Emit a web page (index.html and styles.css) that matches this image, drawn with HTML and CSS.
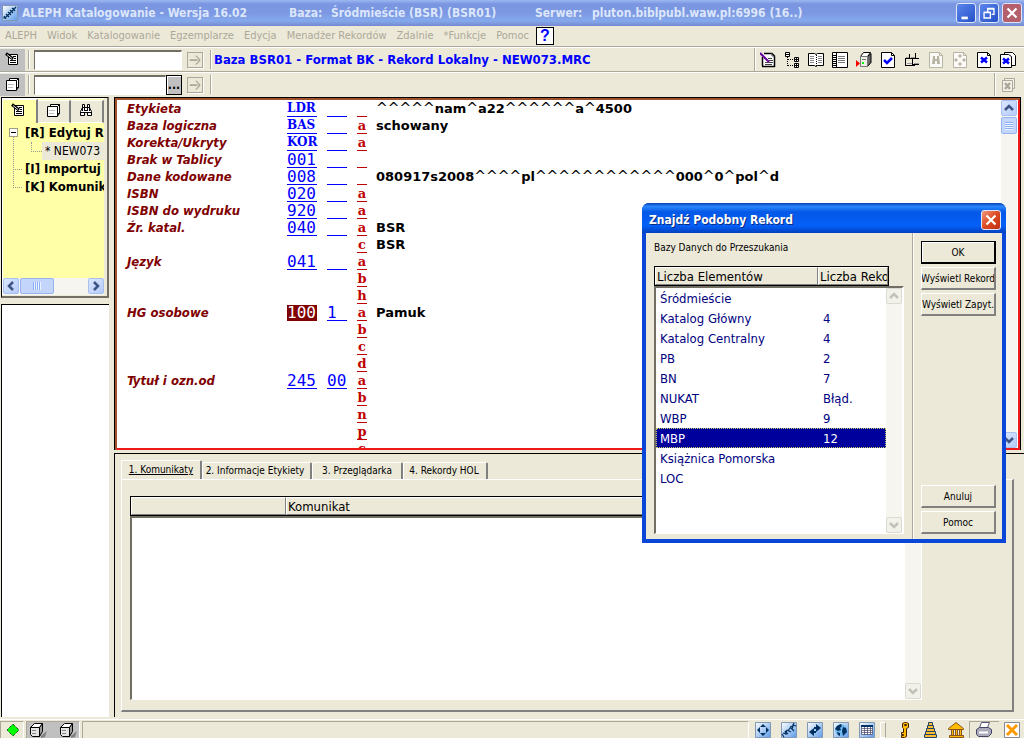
FILE: index.html
```
<!DOCTYPE html>
<html lang="pl">
<head>
<meta charset="utf-8">
<title>ALEPH Katalogowanie</title>
<link rel="stylesheet" href="styles.css">
</head>
<body>
<svg class="defs" aria-hidden="true">
  <symbol id="i-note" viewBox="0 0 16 16"><path d="M4.500 3.500h9v10h-9z" fill="#fff" stroke="#000"/><path d="M9 5.500h3M10 7.500h2M6 9.500h6M6 11.500h6" stroke="#000" fill="none"/><path d="M2 2.500l7 5.500" stroke="#000" stroke-width="3"/><path d="M3 3.500l5 4" stroke="#ddd"/></symbol>
  <symbol id="i-pages" viewBox="0 0 16 16"><path d="M5.500 4.500v-2h9v9h-2" fill="#fff" stroke="#000"/><path d="M2.500 4.500h10v10h-10z" fill="#fff" stroke="#000"/><path d="M12.500 4.500l2-2M12.500 14l2-2.500" stroke="#000"/><path d="M4 8.500h6M4 11.500h5" stroke="#bbb"/></symbol>
  <symbol id="i-binoc" viewBox="0 0 16 16"><path d="M4.500 2.500h2v3h3v-3h2v3l2 4v4h-4v-3h-3v3h-4v-4l2-4z" fill="#fff" stroke="#000"/><path d="M4 5.500h3M9 5.500h3M3 10.500h4M9 10.500h4M6.500 6v3M9.500 6v3M7 8.500h2M4.500 6v3M11.500 6v3" stroke="#000" fill="none"/></symbol>
  <symbol id="i-arrow" viewBox="0 0 16 16"><path d="M2 7h9v2H2zM8 3h2l4 4v2l-4 4H8l4-4V7z" fill="#aca899"/></symbol>
  <symbol id="i-up" viewBox="0 0 14 14"><path d="M3 9l4-4 4 4" fill="none" stroke="currentColor" stroke-width="2.500"/></symbol>
  <symbol id="i-down" viewBox="0 0 14 14"><path d="M3 5l4 4 4-4" fill="none" stroke="currentColor" stroke-width="2.500"/></symbol>
  <symbol id="i-left" viewBox="0 0 14 14"><path d="M9 3L5 7l4 4" fill="none" stroke="currentColor" stroke-width="2.500"/></symbol>
  <symbol id="i-right" viewBox="0 0 14 14"><path d="M5 3l4 4-4 4" fill="none" stroke="currentColor" stroke-width="2.500"/></symbol>
  <symbol id="i-page" viewBox="0 0 16 16"><path d="M1.500 .500h10l3 3v12h-13z" fill="#fff" stroke="currentColor"/><path d="M11.500 .500v3h3" fill="none" stroke="currentColor"/></symbol>
  <symbol id="i-cube" viewBox="0 0 18 16"><path d="M12 14l6-5-2 6-4 1z" fill="#808080"/><path d="M1.500 5.500l4-4h8l-3 4z" fill="#fff" stroke="#000"/><path d="M10.500 5.500l3-4v8l-3 5z" fill="#999" stroke="#000"/><path d="M1.500 5.500h9v9h-7l-2-2z" fill="#e4e4e4" stroke="#000"/><path d="M3 8.500h4M3 11.500h4" stroke="#888"/></symbol>
  <linearGradient id="tile" x2="1" y2="1"><stop offset="0" stop-color="#fff"/><stop offset="1" stop-color="#5b9bea"/></linearGradient>
  <symbol id="i-tile" viewBox="0 0 16 16"><path d="M.500 .500h15v15H.500z" fill="url(#tile)" stroke="#8398b4"/></symbol>
</svg>

<header class="titlebar">
  <svg class="logo" viewBox="0 0 16 16"><use href="#i-tile"/><path d="M1 13l3-1 10-10M2 11l2 3M4 9l3 3M6 7l3 3M8 5l3 3M10 3l3 3" stroke="#003060" stroke-width="1.300" fill="none"/></svg>
  <h1 class="title"><span class="t-app">ALEPH Katalogowanie - Wersja 16.02</span><span class="t-base">Baza:</span><span class="t-name">Śródmieście (BSR) (BSR01)</span><span class="t-serv">Serwer:</span><span>pluton.biblpubl.waw.pl:6996 (16..)</span></h1>
  <div class="winbtns">
    <button class="wbtn" aria-label="Minimalizuj"><svg viewBox="0 0 20 20"><path d="M5 14h7v3H5z" fill="#fff"/></svg></button>
    <button class="wbtn" aria-label="Przywróć"><svg viewBox="0 0 20 20"><path d="M8.500 9V5.500h7v6H13M8 5h8M4.500 9.500h7v6h-7zM4 9h8" fill="none" stroke="#fff" stroke-width="1.500"/></svg></button>
    <button class="wbtn wclose dim" aria-label="Zamknij"><svg viewBox="0 0 20 20"><path d="M5 5l10 10M15 5L5 15" stroke="#fff" stroke-width="2.500"/></svg></button>
  </div>
</header>

<nav class="menu">
  <button>ALEPH</button><button>Widok</button><button>Katalogowanie</button><button>Egzemplarze</button><button>Edycja</button><button>Menadżer Rekordów</button><button>Zdalnie</button><button>*Funkcje</button><button>Pomoc</button>
  <button class="help">?</button>
</nav>

<div class="toolbar">
  <span class="mode"><svg class="ic"><use href="#i-note"/></svg></span>
  <i class="grip"></i>
  <input class="field" type="text" aria-label="Numer rekordu">
  <button class="go" aria-label="Przejdź"><svg class="ic"><use href="#i-arrow"/></svg></button>
  <i class="sep"></i>
  <strong class="record">Baza BSR01 - Format BK - Rekord Lokalny - NEW073.MRC</strong>
  <div class="tools">
    <button aria-label="Edytuj"><svg class="ic" viewBox="0 0 16 16"><path d="M2.500 1.500h9l3 3v10h-12z" fill="#fff"/><path d="M4 1.500h8l3 3M14.500 4v11M15 14.500H2M2.500 14V5" fill="none" stroke="#000" stroke-width="1.500"/><path d="M12 1v3h3M8 6.500h4M9 8.500h4M5 10.500h8M5 12.500h7" fill="none" stroke="#444"/><path d="M0 1l9 9" stroke="#609" stroke-width="2"/></svg></button>
    <button aria-label="Drzewo"><svg class="ic" viewBox="0 0 16 16"><path d="M1.500 .500h4v4h-4zM10.500 5.500h4v4h-4zM10.500 11.500h4v4h-4z" fill="#fff" stroke="#000"/><path d="M10 7.500h5M12.500 5v5M10 13.500h5M12.500 11v5M1 2.500h5" stroke="#000"/><path d="M3.500 5v9M4 7.500h6M4 13.500h6" stroke="#000" stroke-dasharray="1 1"/></svg></button>
    <button aria-label="Książka"><svg class="ic" viewBox="0 0 16 16"><path d="M.500 1.500h6l1.500 1 1.500-1h6v12h-6l-1.500 1-1.500-1h-6z" fill="#fff" stroke="#000"/><path d="M8.500 3v11" stroke="#000" stroke-dasharray="1 1"/><path d="M2 4.500h4M2 6.500h4M2 8.500h4M2 10.500h4M10 4.500h4M10 6.500h4M10 8.500h4M10 10.500h4" stroke="#888"/></svg></button>
    <button aria-label="Notes"><svg class="ic" viewBox="0 0 16 16"><path d="M.500 .500h15v15H.500z" fill="#fff" stroke="#000"/><path d="M4.500 1v15" stroke="#000"/><path d="M1 3.500h3M1 5.500h3M1 7.500h3M1 9.500h3M1 11.500h3M1 13.500h3" stroke="#000"/><path d="M6 4.500h7M6 6.500h7M6 8.500h7M6 10.500h7" stroke="#777"/></svg></button>
    <button aria-label="Serwer"><svg class="ic" viewBox="0 0 16 16"><path d="M4.500 4.500l3-4h7l-3 4z" fill="#fff" stroke="#000"/><path d="M11.500 4.500l3.500-3v9l-3.500 4z" fill="#666" stroke="#000"/><path d="M4.500 4.500h7v10h-7z" fill="#f0eee4" stroke="#777"/><path d="M6 7.500h4" stroke="#777"/><path d="M6 10h2v2H6z" fill="#0f0"/><path d="M0 8l4 3.500L0 15z" fill="#f00"/></svg></button>
    <button aria-label="Sprawdź"><svg class="ic" viewBox="0 0 16 16"><use href="#i-page"/><path d="M4 8l3 3 5-5" fill="none" stroke="#00f" stroke-width="2.500"/></svg></button>
    <button aria-label="Podziel"><svg class="ic" viewBox="0 0 16 16"><path d="M1 6.500h14M5.500 2v5M11.500 1v6M1 13.500h10M1.500 7v6M8.500 7v7M9 12.500h6" stroke="#000"/><path d="M3 11.500h5M10 11.500h5M2 5.500h3M7 5.500h4" stroke="#999"/></svg></button>
    <button aria-label="Szukaj"><svg class="ic dimic" viewBox="0 0 16 16"><use href="#i-page"/><path d="M5 4h2v3h2V4h2l1 8H9V9H7v3H4z" fill="#aca899"/></svg></button>
    <button aria-label="Przenieś"><svg class="ic dimic" viewBox="0 0 16 16"><use href="#i-page"/><path d="M8 2l2 2-2 2-2-2zM8 10l2 2-2 2-2-2zM4 6l2 2-2 2-2-2zM12 6l2 2-2 2-2-2z" fill="#aca899"/></svg></button>
    <button aria-label="Zamknij rekord"><svg class="ic" viewBox="0 0 16 16"><use href="#i-page"/><path d="M5 5.500l6 5M11 5.500l-6 5" stroke="#00f" stroke-width="2.500"/></svg></button>
    <button aria-label="Zamknij wszystkie"><svg class="ic" viewBox="0 0 16 16"><path d="M4.500 2.500v-2h8l3 3v10h-4" fill="#fff" stroke="#000"/><path d="M.500 2.500h8l3 2v11h-11z" fill="#fff" stroke="#000"/><path d="M3 6.500l6 5M9 6.500l-6 5" stroke="#00f" stroke-width="2.500"/></svg></button>
  </div>
</div>
<div class="toolbar">
  <span class="mode"><svg class="ic"><use href="#i-pages"/></svg></span>
  <i class="grip"></i>
  <input class="field short" type="text" aria-label="Kod kreskowy">
  <button class="dots" aria-label="Lista">...</button>
  <button class="go" aria-label="Przejdź do egzemplarza"><svg class="ic"><use href="#i-arrow"/></svg></button>
  <i class="sep"></i>
  <div class="tools last">
    <button aria-label="Zamknij egzemplarze"><svg class="ic" viewBox="0 0 16 16"><path d="M4.500 3.500v-2h10v10h-2M2.500 3.500h10v11h-10z" fill="#f4f2e8" stroke="#aca899"/><path d="M5 6l5 6M10 6l-5 6" stroke="#aca899" stroke-width="2.500"/></svg></button>
  </div>
</div>

<main class="main">
  <aside class="side">
    <section class="navbox">
      <div class="navtabs">
        <button class="on" aria-label="Rekordy"><svg class="ic"><use href="#i-note"/></svg></button>
        <button aria-label="Egzemplarze"><svg class="ic"><use href="#i-pages"/></svg></button>
        <button aria-label="Wyszukiwanie"><svg class="ic"><use href="#i-binoc"/></svg></button>
      </div>
      <ul class="tree">
        <li class="root"><span class="twist"></span>[R] Edytuj R</li>
        <li class="leaf"><span class="picked">* NEW073</span></li>
        <li class="node">[I] Importuj</li>
        <li class="node">[K] Komunika</li>
      </ul>
      <div class="hscroll">
        <button class="sb" aria-label="W lewo"><svg><use href="#i-left"/></svg></button>
        <span class="thumb"></span>
        <button class="sb" aria-label="W prawo"><svg><use href="#i-right"/></svg></button>
      </div>
    </section>
    <section class="blank"></section>
  </aside>

  <div class="work">
    <section class="editor">
      <div class="fields">
        <div class="row"><span class="lab">Etykieta</span><span class="tag alpha">LDR</span><span class="ind"></span><span class="sub"></span><span class="val"><i>^^^^^</i>nam<i>^</i>a22<i>^^^^^^</i>a<i>^</i>4500</span></div>
        <div class="row"><span class="lab">Baza logiczna</span><span class="tag alpha">BAS</span><span class="ind"></span><span class="sub">a</span><span class="val">schowany</span></div>
        <div class="row"><span class="lab">Korekta/Ukryty</span><span class="tag alpha">KOR</span><span class="ind"></span><span class="sub">a</span></div>
        <div class="row"><span class="lab">Brak w Tablicy</span><span class="tag">001</span><span class="ind"></span><span class="sub"></span></div>
        <div class="row"><span class="lab">Dane kodowane</span><span class="tag">008</span><span class="ind"></span><span class="sub"></span><span class="val">080917s2008<i>^^^^</i>pl<i>^^^^^^^^^^^^</i>000<i>^</i>0<i>^</i>pol<i>^</i>d</span></div>
        <div class="row"><span class="lab">ISBN</span><span class="tag">020</span><span class="ind"></span><span class="sub">a</span></div>
        <div class="row"><span class="lab">ISBN do wydruku</span><span class="tag">920</span><span class="ind"></span><span class="sub">a</span></div>
        <div class="row"><span class="lab">Źr. katal.</span><span class="tag">040</span><span class="ind"></span><span class="sub">a</span><span class="val">BSR</span></div>
        <div class="row"><span class="sub">c</span><span class="val">BSR</span></div>
        <div class="row"><span class="lab">Język</span><span class="tag">041</span><span class="ind"></span><span class="sub">a</span></div>
        <div class="row"><span class="sub">b</span></div>
        <div class="row"><span class="sub">h</span></div>
        <div class="row"><span class="lab">HG osobowe</span><span class="tag hot">100</span><span class="ind">1</span><span class="sub">a</span><span class="val">Pamuk</span></div>
        <div class="row"><span class="sub">b</span></div>
        <div class="row"><span class="sub">c</span></div>
        <div class="row"><span class="sub">d</span></div>
        <div class="row"><span class="lab">Tytuł i ozn.od</span><span class="tag">245</span><span class="ind">00</span><span class="sub">a</span></div>
        <div class="row"><span class="sub">b</span></div>
        <div class="row"><span class="sub">n</span></div>
        <div class="row"><span class="sub">p</span></div>
        <div class="row"><span class="sub">c</span></div>
      </div>
      <div class="vscroll">
        <button class="sb" aria-label="W górę"><svg><use href="#i-up"/></svg></button>
        <span class="thumb"></span>
        <button class="sb end" aria-label="W dół"><svg><use href="#i-down"/></svg></button>
      </div>
    </section>

    <section class="lower">
      <div class="tabs" role="tablist">
        <button role="tab" aria-selected="true" class="tab t1"><u>1. Komunikaty</u></button><button role="tab" class="tab t2">2. Informacje Etykiety</button><button role="tab" class="tab t3">3. Przeglądarka</button><button role="tab" class="tab t4">4. Rekordy HOL</button>
      </div>
      <div class="frame">
        <div class="messages">
          <div class="head mhead"><span></span><span>Komunikat</span></div>
          <div class="mlist">
            <div class="vscroll off"><button class="sb end" aria-label="Komunikaty w dół"><svg><use href="#i-down"/></svg></button></div>
          </div>
        </div>
      </div>
    </section>
  </div>
</main>

<footer class="status">
  <span class="cell c1"><svg class="ic" viewBox="0 0 16 16"><path d="M8 2l6 6-6 6-6-6z" fill="#0f0" stroke="#000" stroke-dasharray="1 1"/></svg></span>
  <span class="cell c2"><svg class="cube"><use href="#i-cube"/></svg><svg class="cube"><use href="#i-cube"/></svg></span>
  <span class="cell c3"></span>
  <div class="tray">
    <button aria-label="Wyszukiwanie"><svg class="ic" viewBox="0 0 16 16"><use href="#i-tile"/><path d="M8 2l3 3H5zM8 14l3-3H5zM2 8l3-3v6zM14 8l-3-3v6z" fill="#003060"/></svg></button>
    <button aria-label="MARC"><svg class="ic" viewBox="0 0 16 16"><use href="#i-tile"/><path d="M1 12l2 3M2 11l3 1-1-3 3 3M6 8l4 2M7 9l2-3M6 8l-1 3M9 5l4 4M9 5l3-1-1 3M15 4l-3-1 1-2" stroke="#003060" stroke-width="1.200" fill="none"/></svg></button>
    <button aria-label="Wymiana"><svg class="ic" viewBox="0 0 16 16"><use href="#i-tile"/><path d="M9 2l5 4-5 4V7H7V5h2zM7 6v3h2v2H7v3L2 10z" fill="#003060"/></svg></button>
    <button aria-label="Sieć"><svg class="ic" viewBox="0 0 16 16"><use href="#i-tile"/><circle cx="8" cy="8" r="6" fill="#70b8f0"/><path d="M4 4l4-2 1 2-2 2 1 2-3 1-3-2zM10 5l3 1 1 4-4 4-1-5zM4 10l3 1v3l-2-1z" fill="#003060"/></svg></button>
    <button aria-label="Tabela"><svg class="ic" viewBox="0 0 16 16"><use href="#i-tile"/><path d="M2.500 3.500h11v9h-11zM2.500 6.500h11M2.500 8.500h11M2.500 10.500h11M5.500 5v8M8.500 5v8M11.500 5v8" fill="#fff" stroke="#446" stroke-width=".700"/><path d="M2 3h12v2H2z" fill="#036"/></svg></button>
    <i class="handle"></i>
    <button aria-label="Klucz"><svg class="ic" viewBox="0 0 16 16"><path d="M6.500 1.500l2-1h2l2 1v4l-2 1v8l-2 1h-3v-2h2v-1h-2v-2h2v-4l-1-1z" fill="#fb0" stroke="#420"/><path d="M8.500 2.500h2v1h-2z" fill="#fff" stroke="#420"/></svg></button>
    <button aria-label="Baza"><svg class="ic" viewBox="0 0 16 16"><path d="M6.500 .500h4v3h-4zM5.500 3.500h6v3h-6zM4.500 6.500h8v3h-8zM3.500 9.500h10v3h-10zM2.500 12.500h12v3h-12z" fill="#fb3" stroke="#246"/></svg></button>
    <button aria-label="Biblioteka"><svg class="ic" viewBox="0 0 16 16"><path d="M.500 6.500l7.500-6 7.500 6v1H.500zM3.500 7.500h2v6h-2zM7.500 7.500h2v6h-2zM11.500 7.500h2v6h-2zM1.500 13.500h14v2h-14z" fill="#fb0" stroke="#852"/></svg></button>
    <button class="sunk" aria-label="Drukarka"><svg class="ic" viewBox="0 0 16 16"><path d="M5.500 .500h8l-2 5h-8z" fill="#fff" stroke="#557"/><path d="M.500 7.500l3-2h9l3 2v4l-3 3h-10l-2-2z" fill="#aab" stroke="#446"/><path d="M3 10.500h9" stroke="#fff" stroke-width="2"/></svg></button>
    <button aria-label="Zamknij"><svg class="ic" viewBox="0 0 16 16"><path d="M.500 .500h15v15H.500z" fill="#fff" stroke="#889"/><path d="M3 3l10 10M13 3L3 13" stroke="#f90" stroke-width="3"/></svg></button>
  </div>
</footer>

<section class="dialog" role="dialog" aria-labelledby="dlg">
  <header class="dtitle"><h2 id="dlg">Znajdź Podobny Rekord</h2><button class="wbtn wclose" aria-label="Zamknij okno"><svg viewBox="0 0 20 20"><path d="M5 5l10 10M15 5L5 15" stroke="#fff" stroke-width="2.500"/></svg></button></header>
  <div class="dbody">
    <div class="dleft">
      <p class="dlabel">Bazy Danych do Przeszukania</p>
      <div class="head dhead"><span>Liczba Elementów</span><span>Liczba Reko</span></div>
      <div class="dlist">
        <table>
          <tr><td>Śródmieście</td><td></td></tr>
          <tr><td>Katalog Główny</td><td>4</td></tr>
          <tr><td>Katalog Centralny</td><td>4</td></tr>
          <tr><td>PB</td><td>2</td></tr>
          <tr><td>BN</td><td>7</td></tr>
          <tr><td>NUKAT</td><td>Błąd.</td></tr>
          <tr><td>WBP</td><td>9</td></tr>
          <tr class="sel"><td>MBP</td><td>12</td></tr>
          <tr><td>Książnica Pomorska</td><td></td></tr>
          <tr><td>LOC</td><td></td></tr>
        </table>
        <div class="vscroll off"><button class="sb" aria-label="Lista w górę"><svg><use href="#i-up"/></svg></button><button class="sb end" aria-label="Lista w dół"><svg><use href="#i-down"/></svg></button></div>
      </div>
    </div>
    <div class="dbtns">
      <button class="btn default">OK</button>
      <button class="btn"><span>Wyświetl Rekord</span></button>
      <button class="btn"><span>Wyświetl Zapyt.</span></button>
      <button class="btn push">Anuluj</button>
      <button class="btn">Pomoc</button>
    </div>
  </div>
</section>
</body>
</html>
```

FILE: styles.css
```
* { box-sizing: border-box; }
html { height: 100%; }
body {
  margin: 0;
  min-height: 100%;
  height: 100vh;
  display: flex;
  flex-direction: column;
  overflow: hidden;
  background: #ece9d8;
  color: #000;
  font-family: "DejaVu Sans Condensed", "DejaVu Sans", sans-serif;
  font-size: 12px;
}
button { font: inherit; color: inherit; padding: 0; margin: 0; border: 0; background: none; }
.defs { position: absolute; width: 0; height: 0; }
.ic { display: block; width: 16px; height: 16px; }
i { font-style: normal; }

/* title bar */
.titlebar {
  display: flex;
  align-items: center;
  flex: none;
  height: 26px;
  padding: 0 2px;
  background: linear-gradient(#9db9f0, #7b96e1 15%, #7c98e2 50%, #85a9ec 80%, #7688cf);
}
.logo { width: 16px; height: 16px; }
.title {
  flex: 1;
  display: flex;
  margin: 0 0 0 4px;
  font-size: 12px;
  line-height: 16px;
  color: #dce6fa;
  white-space: nowrap;
}
.t-app { width: 267px; }
.t-base { width: 42px; }
.t-name { width: 204px; }
.t-serv { width: 57px; }
.winbtns { display: flex; gap: 3px; }
.wbtn {
  width: 20px;
  height: 20px;
  border: 1px solid #dfe6f8;
  border-radius: 3px;
  background: linear-gradient(135deg, #5c86ec, #2450c8);
}
.wbtn svg { display: block; width: 18px; height: 18px; }
.wclose { background: linear-gradient(135deg, #f09a80, #dc4a22 50%, #c03010); }
.wclose.dim { background: #b4606c; }

/* menu */
.menu {
  display: flex;
  align-items: center;
  flex: none;
  height: 20px;
  padding-left: 5px;
  gap: 10px;
  font-size: 11px;
  color: #aca899;
}
.menu button { margin-top: -2px; }
.menu .help {
  width: 18px;
  height: 18px;
  margin: 0 0 0 -3px;
  border: 1px solid #000;
  background: #fff;
  color: #00f;
  font: bold 16px/16px "Liberation Sans", sans-serif;
}

/* toolbars */
.toolbar {
  display: flex;
  align-items: center;
  flex: none;
  height: 25px;
  border-top: 1px solid #aca899;
  box-shadow: inset 0 1px #fff;
  padding-top: 1px;
}
.mode { width: 25px; height: 22px; padding: 2px 4px; background: #c0c0c0; }
.grip { width: 2px; height: 19px; margin: 0 4px 0 3px; background: #aca899; border-right: 1px solid #fff; }
.field {
  width: 148px;
  height: 20px;
  padding: 0 2px;
  border: 1px solid #fff;
  border-top: 2px solid #716f64;
  border-left-color: #716f64;
  background: #fff;
}
.short { width: 132px; }
.go { width: 16px; height: 16px; margin: 0 7px 0 5px; border: 1px solid #aca899; box-shadow: 1px 1px #fff; }
.go .ic { width: 14px; height: 14px; }
.dots {
  width: 16px;
  height: 20px;
  border: 1px solid #000;
  box-shadow: inset 1px 1px #fff;
  background: #c0c0c0;
  font-weight: bold;
  line-height: 10px;
}
.sep { width: 2px; height: 19px; background: #aca899; border-right: 1px solid #fff; }
.record { margin-left: 2px; color: #00f; font-size: 13px; line-height: 16px; white-space: nowrap; }
.tools {
  display: flex;
  gap: 8px;
  align-items: center;
  align-self: stretch;
  margin-left: auto;
  padding: 0 8px 0 5px;
  border-left: 1px solid #aca899;
  box-shadow: inset 1px 0 #fff;
}
.dimic { color: #aca899; opacity: .8; }

/* main area */
.main { flex: 1; min-height: 0; display: flex; gap: 5px; padding-top: 1px; }
.side { width: 109px; flex: none; display: flex; flex-direction: column; gap: 6px; }
.navbox {
  display: flex;
  flex-direction: column;
  height: 201px;
  margin-left: 1px;
  border: 1px solid #000;
  border-width: 1px 0 0 1px;
  border-right: 2px solid #716f64;
  border-bottom: 2px solid #716f64;
  background: #ffffa8;
  padding: 1px 3px 1px 1px;
  box-shadow: inset -3px -1px #ece9d8, inset 1px 1px #fff;
}
.navtabs { display: flex; height: 24px; flex: none; }
.navtabs button { width: 33px; margin-top: 1px; border-top: 1px solid #fff; border-right: 2px solid #808080; border-bottom: 1px solid #fff; padding: 0 0 4px 7px; background: #ece9d8; }
.navtabs button.on { width: 35px; margin-top: 0; background: #ffffa8; border-bottom: 0; }
.tree {
  flex: 1;
  margin: 0;
  padding: 1px 0 0 22px;
  list-style: none;
  overflow: hidden;
  white-space: nowrap;
  font-size: 13px;
  font-weight: bold;
  line-height: 18px;
}
.root { position: relative; }
.twist {
  position: absolute;
  left: -16px;
  top: 4px;
  width: 9px;
  height: 9px;
  border: 1px solid #a0a080;
  background: linear-gradient(#000, #000) center / 5px 1px no-repeat #fff;
}
.leaf { padding-left: 17px; font-size: 12px; font-weight: normal; position: relative; }
.picked { display: block; padding-left: 3px; background: #ece9d8; }
.leaf::before, .node::before, .root::before { content: ""; position: absolute; border: 0 dotted #999; }
.leaf::before { left: 6px; top: 0; width: 10px; height: 9px; border-width: 0 0 1px 1px; }
.root::before { left: -12px; top: 13px; width: 1px; height: 51px; border-left-width: 1px; }
.node { position: relative; }
.node::before { left: -12px; top: 9px; width: 9px; border-top-width: 1px; }
.hscroll { display: flex; height: 17px; flex: none; padding-bottom: 1px; background: #f6f5f0; }
.hscroll .thumb { width: 34px; margin: 0 auto 0 1px; }
.sb {
  width: 16px;
  height: 16px;
  flex: none;
  border: 1px solid #a8c0f0;
  border-radius: 2px;
  background: linear-gradient(135deg, #dce6fe, #b4cbfa);
  color: #3d5484;
}
.sb svg { display: block; width: 14px; height: 14px; }
.thumb {
  border: 1px solid #98b4ee;
  border-radius: 2px;
  background: repeating-linear-gradient(90deg, #8cb0f8 0 1px, #eef4fe 1px 2px) center / 8px 8px no-repeat, #c4d5fc;
}
.vscroll { display: flex; flex-direction: column; width: 16px; flex: none; background: #f6f5f0; }
.vscroll .end { margin-top: auto; }
.vscroll .thumb { height: 17px; margin-top: 1px; background: repeating-linear-gradient(#8cb0f8 0 1px, #eef4fe 1px 2px) center / 8px 8px no-repeat, #c4d5fc; }
.off .sb { border-color: #dcdad0; background: #f2f1ea; color: #c4c2b8; }
.blank { flex: 1; border: 1px solid #000; border-width: 1px 0 0 1px; margin-bottom: 2px; margin-left: 1px; background: #fff; }

/* record editor */
.work { flex: 1; min-width: 0; display: flex; flex-direction: column; gap: 3px; }
.editor {
  flex: 1;
  min-height: 0;
  display: flex;
  margin-right: 3px;
  border: 1px solid #000;
  border-bottom: 0;
  background: #fff;
  overflow: hidden;
  box-shadow: inset 2px 2px #a0522d, inset -2px -2px #f01818;
  padding: 2px 3px 2px 2px;
}
.fields { flex: 1; overflow: hidden; padding: 1px 0 0 10px; }
.row { display: grid; grid-template-columns: 160px 30px 10px 20px 10px 10px 9px 1fr; height: 17px; line-height: 16px; white-space: nowrap; }
.lab { grid-column: 1; color: #800000; font-size: 13px; font-style: italic; font-weight: bold; }
.tag, .ind { height: 16px; color: #00f; border-bottom: 1px solid #00f; font: 16px/15px "DejaVu Sans Mono", monospace; }
.tag { grid-column: 2; }
.alpha { font: bold 12px/15px "DejaVu Serif", serif; }
.ind { grid-column: 4; }
.hot { background: #800000; color: #fff; border-bottom-color: #800000; }
.sub { grid-column: 6; height: 16px; text-align: center; color: #c00000; border-bottom: 1px solid #c00000; font: bold 13px/15px "DejaVu Serif", serif; }
.val { grid-column: 8; font: bold 13px/16px "DejaVu Sans", sans-serif; }
.val i { font-weight: normal; font-size: 14px; line-height: 14px; }

/* lower panel */
.lower {
  flex: 0 0 42.5%;
  min-height: 0;
  display: flex;
  flex-direction: column;
  margin-bottom: 2px;
  border: 1px solid #000;
  border-width: 1px 0 0 1px;
  padding: 6px 10px 5px 6px;
}
.tabs { display: flex; align-items: flex-end; height: 19px; flex: none; font-size: 10px; }
.tab { height: 17px; border: 1px solid #fff; border-right: 2px solid #808080; border-bottom: 0; border-radius: 2px 2px 0 0; white-space: nowrap; }
.t1 { width: 81px; height: 19px; }
.t2 { width: 110px; padding-right: 3px; }
.t3 { width: 91px; }
.t4 { width: 85px; padding-right: 2px; }
.frame {
  flex: 1;
  min-height: 0;
  border: 1px solid #fff;
  border-right: 2px solid #808080;
  border-bottom: 2px solid #808080;
  padding: 16px 90px 10px 8px;
}
.messages { height: 100%; display: flex; flex-direction: column; }
.head {
  display: flex;
  flex: none;
  height: 20px;
  border: 1px solid #000;
  font-size: 13px;
  line-height: 18px;
  white-space: nowrap;
}
.head span { border: 1px solid #fff; border-right-color: #808080; border-bottom-color: #808080; overflow: hidden; padding-left: 1px; line-height: 17px; }
.mhead { margin-right: 16px; }
.mhead span:first-child { width: 155px; }
.mhead span:last-child { flex: 1; }
.mlist { flex: 1; display: flex; justify-content: flex-end; border: 1px solid #fff; border-top: 2px solid #716f64; border-left: 2px solid #716f64; background: #fff; }

/* status bar */
.status { display: flex; flex: none; height: 19px; gap: 2px; border-top: 1px solid #fff; padding-top: 1px; }
.cell { border: 1px solid #aca899; border-right-color: #fff; border-bottom: 0; height: 17px; overflow: hidden; }
.c1 { width: 24px; padding-left: 4px; }
.c2 { display: flex; width: 54px; gap: 12px; padding-left: 2px; background: #c0c0c0; }
.c3 { flex: 1; }
.cube { width: 18px; height: 16px; flex: none; }
.tray { display: flex; gap: 10px; align-items: center; padding: 0 4px; }
.tray .handle { width: 6px; height: 16px; margin: 0 0 0 -5px; border: 1px solid #fff; border-right-color: #aca899; }
.sunk { width: 30px; height: 17px; margin: 0 -5px; padding-left: 6px; border: 1px solid #aca899; border-width: 1px 0 0 1px; }

/* dialog window */
.dialog {
  position: absolute;
  right: 18px;
  top: 203px;
  width: 364px;
  height: 340px;
  display: flex;
  flex-direction: column;
  border: 4px solid #0a46d8;
  border-top: 0;
  border-radius: 7px 7px 0 0;
  background: #ece9d8;
}
.dtitle {
  display: flex;
  align-items: center;
  justify-content: space-between;
  flex: none;
  height: 30px;
  margin: 0 -4px;
  padding: 3px 5px 0 7px;
  border-radius: 7px 7px 0 0;
  background: linear-gradient(#0840b8, #2a86fa 12%, #0458e6 30%, #0460f8 75%, #0040c0);
  color: #fff;
}
.dtitle h2 { margin: 0; font-size: 12px; text-shadow: 1px 1px #0a2a80; }
.dbody { flex: 1; display: flex; min-height: 0; }
.dleft { flex: 1; display: flex; flex-direction: column; padding: 8px 8px 5px 8px; border-right: 1px solid #aca899; box-shadow: 1px 0 #fff; }
.dlabel { margin: 0 0 11px; font-size: 10px; line-height: 14px; }
.dhead { width: 235px; }
.dhead span:first-child { width: 163px; }
.dhead span:last-child { flex: 1; }
.dlist { flex: 1; display: flex; border: 1px solid #fff; border-top: 2px solid #716f64; border-left: 2px solid #716f64; border-right: 2px solid #fff; background: #fff; color: #000080; }
.dlist table { flex: 1; display: block; border-collapse: collapse; font-size: 13px; line-height: 21px; }
.dlist tbody { display: block; }
.dlist tr { display: grid; grid-template-columns: 163px 1fr; height: 20px; }
.dlist td { padding: 0 0 0 4px; }
.dlist .sel { background: #00009c; color: #fff; outline: 1px dotted #cc6; outline-offset: -1px; }
.dbtns { width: 89px; display: flex; flex-direction: column; gap: 3px; padding: 8px 6px 5px 8px; font-size: 10px; }
.btn {
  height: 23px;
  border: 1px solid #fff;
  border-right: 2px solid #808080;
  border-bottom: 2px solid #808080;
  overflow: hidden;
  white-space: nowrap;
  display: flex;
  align-items: center;
  justify-content: center;
}
.default { box-shadow: inset 1px 1px #fff; border: 1px solid #000; border-right-width: 2px; border-bottom-width: 2px; }
.push { margin-top: auto; }
```
